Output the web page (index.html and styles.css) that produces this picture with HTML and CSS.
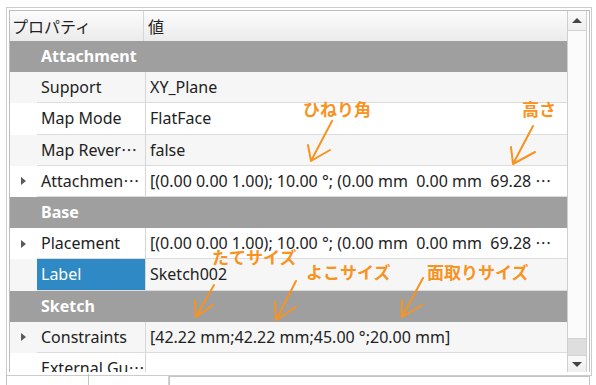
FILE: index.html
```html
<!DOCTYPE html>
<html lang="ja">

<head>
    <meta charset="UTF-8">
    <title>Property View</title>
    <link rel="stylesheet" href="styles.css">
</head>

<body>
    <div class="panel">
        <div class="view">
            <div class="tree">
                <div class="row head">
                    <div class="name">プロパティ</div>
                    <div class="val">値</div>
                </div>
                <div class="row group">Attachment</div>
                <div class="row alt">
                    <span class="branch"></span>
                    <div class="name">Support</div>
                    <div class="val">XY_Plane</div>
                </div>
                <div class="row">
                    <span class="branch"></span>
                    <div class="name">Map Mode</div>
                    <div class="val">FlatFace</div>
                </div>
                <div class="row alt">
                    <span class="branch"></span>
                    <div class="name">Map Rever⋯</div>
                    <div class="val">false</div>
                </div>
                <div class="row">
                    <span class="branch"><i class="arrow"></i></span>
                    <div class="name">Attachmen⋯</div>
                    <div class="val">[(0.00 0.00 1.00); 10.00 °; (0.00 mm&nbsp; 0.00 mm&nbsp; 69.28 ⋯</div>
                </div>
                <div class="row group">Base</div>
                <div class="row">
                    <span class="branch"><i class="arrow"></i></span>
                    <div class="name">Placement</div>
                    <div class="val">[(0.00 0.00 1.00); 10.00 °; (0.00 mm&nbsp; 0.00 mm&nbsp; 69.28 ⋯</div>
                </div>
                <div class="row alt">
                    <span class="branch"></span>
                    <div class="name selected">Label</div>
                    <div class="val">Sketch002</div>
                </div>
                <div class="row group">Sketch</div>
                <div class="row alt">
                    <span class="branch"><i class="arrow"></i></span>
                    <div class="name">Constraints</div>
                    <div class="val">[42.22 mm;42.22 mm;45.00 °;20.00 mm]</div>
                </div>
                <div class="row">
                    <span class="branch"></span>
                    <div class="name">External Gu⋯</div>
                    <div class="val"></div>
                </div>
            </div>
            <div class="scroll">
                <div class="btn up"></div>
                <div class="track"></div>
                <div class="thumb"></div>
                <div class="btn down"></div>
            </div>
        </div>
    </div>

    <div class="tabs">
        <div class="tab"></div>
        <div class="tab current"></div>
        <div class="tab last"></div>
    </div>

    <!-- notes drawn on top of the screenshot -->
    <div class="notes">
        <span class="note" style="left:303px; top:99px">ひねり角</span>
        <span class="note" style="left:522px; top:99px">高さ</span>
        <span class="note" style="left:212px; top:247px">たてサイズ</span>
        <span class="note" style="left:306px; top:262px">よこサイズ</span>
        <span class="note" style="left:427px; top:262px">面取りサイズ</span>
        <svg class="arrows" width="596" height="385" viewBox="0 0 596 385">
            <path d="M332 121 L311 161 L330 150 M311 161 L308 145" />
            <path d="M533 126 L513 164 L535 152 M513 164 L511 147" />
            <path d="M214 285 L196 317 L213 305 M196 317 L195 300" />
            <path d="M296 281 L276 320 L296 307 M276 320 L275 302" />
            <path d="M423 278 L402 317 L422 305 M402 317 L402 300" />
        </svg>
    </div>
</body>

</html>
```

FILE: styles.css
```css
body {
    margin: 0;
    background-color: white;
    font-family: "Noto Sans", "Noto Sans CJK JP", sans-serif;
    font-size: 16px;
    color: #222;
    position: relative;
    width: 596px;
    height: 385px;
    overflow: hidden;
}

.panel {
    margin: 7px 0 0 6px;
    width: 581px;
    height: 364px;
    border: 1px solid #cbcbcb;
    padding: 2px 1px 1px 2px;
}

.view {
    display: flex;
    height: 361px;
    border: 1px solid #bdbdbd;
    border-bottom: none;
}

.tree {
    flex: 1;
    overflow: hidden;
}

.row {
    display: flex;
    height: 31.2px;
    line-height: 30px;
    background-color: white;
}

.row.alt {
    background-color: #f6f6f6;
}

.row .name {
    width: 104px;
    padding-left: 4px;
    border-right: 1px solid #d6d6d6;
    border-bottom: 1px solid #dcdcdc;
    white-space: nowrap;
    overflow: hidden;
}

.row .val {
    flex: 1;
    padding-left: 4px;
    border-bottom: 1px solid #dcdcdc;
    white-space: nowrap;
    overflow: hidden;
}

.row .name.selected {
    background-color: #2f89c5;
    color: white;
}

.branch {
    width: 27px;
    display: flex;
    align-items: center;
    justify-content: center;
}

.arrow {
    width: 0;
    height: 0;
    margin-left: -1px;
    border-top: 4px solid transparent;
    border-bottom: 4px solid transparent;
    border-left: 5px solid #5a5a5a;
}

.row.head {
    height: 30px;
    background: linear-gradient(#fcfcfc, #ebebeb);
}

.row.head .name {
    width: 131px;
    padding-left: 2px;
    border-bottom: none;
    font-family: "Noto Sans CJK JP", sans-serif;
}

.row.head .val {
    border-bottom: none;
    font-family: "Noto Sans CJK JP", sans-serif;
}

.row.group {
    background-color: #9f9f9f;
    color: white;
    font-weight: bold;
    padding-left: 31px;
}

.scroll {
    width: 18px;
    margin-right: 2px;
    border-left: 1px solid #cfcfcf;
    border-right: 1px solid #cfcfcf;
    display: flex;
    flex-direction: column;
}

.btn {
    height: 19px;
    background: linear-gradient(#fafafa, #efefef);
    display: flex;
    align-items: center;
    justify-content: center;
}

.btn.up {
    border-bottom: 1px solid #d2d2d2;
}

.btn.up::after {
    content: "";
    border-left: 5px solid transparent;
    border-right: 5px solid transparent;
    border-bottom: 5px solid #444;
}

.btn.down {
    height: 16px;
    border-top: 1px solid #d2d2d2;
}

.btn.down::after {
    content: "";
    border-left: 5px solid transparent;
    border-right: 5px solid transparent;
    border-top: 5px solid #444;
}

.track {
    flex: 1;
    background-color: #fbfbfb;
}

.thumb {
    height: 16px;
    background-color: #dedede;
    border-top: 1px solid #d0d0d0;
}

.tabs {
    display: flex;
    margin-left: 6px;
    height: 12px;
}

.tab {
    width: 81px;
    border: 1px solid #c4c4c4;
    border-top: none;
    margin-top: -2px;
}

.tab.current {
    width: 79px;
    border: none;
    border-right: 1px solid #d4d4d4;
    margin-top: 0;
}

.tab.last {
    flex: 1;
    margin-right: 6px;
    border-left: 1px solid #c4c4c4;
    border-top: 1px solid #c4c4c4;
    margin-top: 0;
}

.notes {
    position: absolute;
    left: 0;
    top: 0;
    width: 596px;
    height: 385px;
    pointer-events: none;
}

.note {
    position: absolute;
    font-family: "Noto Sans CJK JP", sans-serif;
    font-weight: bold;
    font-size: 17px;
    line-height: 20px;
    color: #f7931e;
    white-space: nowrap;
}

.arrows {
    position: absolute;
    left: 0;
    top: 0;
}

.arrows path {
    fill: none;
    stroke: #f7931e;
    stroke-width: 2;
    stroke-linecap: round;
    stroke-linejoin: round;
}
```
